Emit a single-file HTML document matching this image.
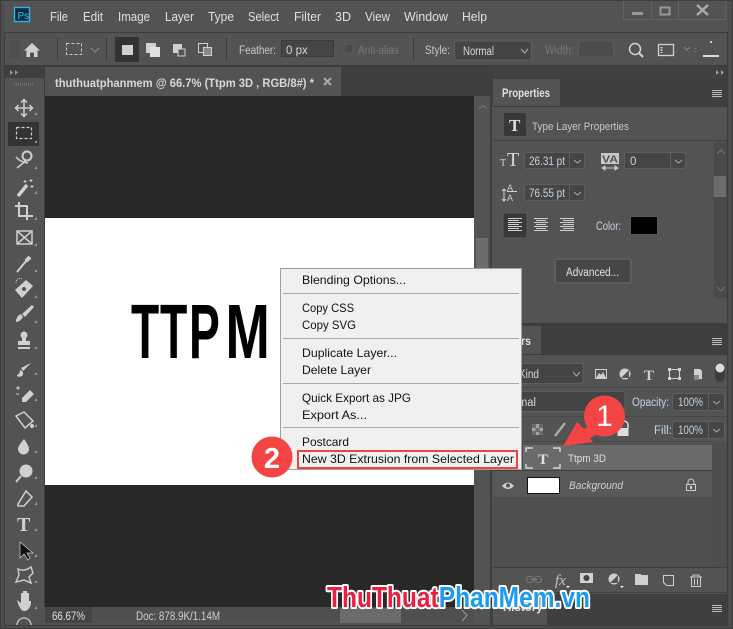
<!DOCTYPE html>
<html><head><meta charset="utf-8"><style>
html,body{margin:0;padding:0;background:#535353;width:733px;height:629px;overflow:hidden}
svg{display:block}
text{font-family:"Liberation Sans",sans-serif;font-size:12px;fill:#d8d8d8}
.m{font-size:12.5px;fill:#e0e0e0}
.c{fill:#111;font-size:12px}
.f{fill:#c4d4e4;font-size:11.5px}
.l{stroke:#3c3c3c;stroke-width:1;fill:none}
.i{fill:#d0d0d0}
.fld{fill:#454545;stroke:#5e5e5e}
</style></head><body>
<svg width="733" height="629" viewBox="0 0 733 629" xmlns="http://www.w3.org/2000/svg">
<rect width="733" height="629" fill="#535353"/>
<rect x="0.5" y="0.5" width="732" height="628" fill="none" stroke="#3d3d3d"/>
<rect x="1" y="1" width="3" height="627" fill="#4c4c4c"/><rect x="728" y="1" width="4" height="627" fill="#4c4c4c"/>
<rect x="1" y="625" width="731" height="3" fill="#4c4c4c"/>
<path class="l" d="M4.500 32.500H728.500M4.500 65.500H728.500M4.500 32.500V625.500M727.500 32.500V625.500M4.500 625.500H727.500"/>
<!-- PS logo -->
<rect x="14.500" y="7.500" width="15" height="14" fill="#0c2a3a" stroke="#29b4f0" stroke-width="1.400"/>
<text x="17.500" y="19" style="font-size:10px;fill:#31c5f4">Ps</text>
<!-- menu -->
<text class="m" x="50" y="21" textLength="18" lengthAdjust="spacingAndGlyphs">File</text>
<text class="m" x="83" y="21" textLength="20" lengthAdjust="spacingAndGlyphs">Edit</text>
<text class="m" x="118" y="21" textLength="32" lengthAdjust="spacingAndGlyphs">Image</text>
<text class="m" x="165" y="21" textLength="29" lengthAdjust="spacingAndGlyphs">Layer</text>
<text class="m" x="208" y="21" textLength="26" lengthAdjust="spacingAndGlyphs">Type</text>
<text class="m" x="248" y="21" textLength="31" lengthAdjust="spacingAndGlyphs">Select</text>
<text class="m" x="294" y="21" textLength="27" lengthAdjust="spacingAndGlyphs">Filter</text>
<text class="m" x="335" y="21" textLength="16" lengthAdjust="spacingAndGlyphs">3D</text>
<text class="m" x="365" y="21" textLength="25" lengthAdjust="spacingAndGlyphs">View</text>
<text class="m" x="404" y="21" textLength="44" lengthAdjust="spacingAndGlyphs">Window</text>
<text class="m" x="462" y="21" textLength="25" lengthAdjust="spacingAndGlyphs">Help</text>
<!-- window controls -->
<path d="M623.500 1V19.500H725.500V1M651.500 1V19M678.500 1V19" fill="none" stroke="#636363"/>
<rect x="632" y="12" width="11" height="3" fill="#999"/>
<rect x="660.500" y="7.500" width="9" height="7" fill="none" stroke="#999" stroke-width="2"/>
<path d="M697 5L708 15M708 5L697 15" stroke="#aaa" stroke-width="2.500"/>
<!-- options bar -->
<path stroke="#4a4a4a" d="M9 41H20M9 43H20M9 45H20M9 47H20M9 49H20M9 51H20M9 53H20M9 55H20M9 57H20" />
<path class="i" d="M32 43L24 50.500H26.500V57H30V52.500H34V57H37.500V50.500H40Z"/>
<path d="M57.500 37V61M106.500 37V61M226.500 37V61M413.500 37V61" stroke="#3f3f3f"/>
<rect x="66.500" y="43.500" width="15" height="11" fill="none" stroke="#ccc" stroke-dasharray="3 2"/>
<path d="M91 48L95 52L99 48" fill="none" stroke="#8a8a8a"/>
<rect x="115" y="37" width="24" height="25" rx="1" fill="#333"/>
<rect x="122" y="45" width="11" height="10" class="i"/>
<rect x="146" y="43" width="10" height="10" class="i"/><rect x="150" y="47" width="10" height="10" fill="#e0e0e0"/>
<rect x="173" y="44" width="9" height="9" class="i"/><rect x="178" y="49" width="7" height="7" fill="#535353" stroke="#d0d0d0"/>
<rect x="198.500" y="43.500" width="9" height="9" fill="none" stroke="#d0d0d0"/><rect x="203.500" y="47.500" width="8" height="8" fill="#8a8a8a" stroke="#d0d0d0"/>
<text x="239" y="54" style="font-size:11.500px;fill:#c8c8c8" textLength="37" lengthAdjust="spacingAndGlyphs">Feather:</text>
<rect x="281.500" y="40.500" width="52" height="16" fill="#454545" stroke="#3a3a3a"/>
<text x="286" y="54" style="font-size:11.500px">0 px</text>
<rect x="344" y="44" width="9" height="9" fill="#4a4a4a" stroke="#5e5e5e"/>
<text x="358" y="54" style="font-size:11.500px;fill:#777" textLength="41" lengthAdjust="spacingAndGlyphs">Anti-alias</text>
<text x="425" y="54" style="font-size:11.500px;fill:#c8c8c8" textLength="25" lengthAdjust="spacingAndGlyphs">Style:</text>
<rect x="454.500" y="41" width="77" height="19" rx="2" fill="#444" stroke="#5f5f5f"/>
<text x="463" y="55" style="font-size:11.500px" textLength="31" lengthAdjust="spacingAndGlyphs">Normal</text>
<path d="M521 49L524.500 53L528 49" fill="none" stroke="#b0b0b0"/>
<text x="545" y="54" style="font-size:11.500px;fill:#777" textLength="29" lengthAdjust="spacingAndGlyphs">Width:</text>
<rect x="578.500" y="41" width="35" height="16" fill="#4c4c4c" stroke="#5a5a5a"/>
<circle cx="635" cy="49" r="5.500" fill="none" stroke="#d4d4d4" stroke-width="1.500"/><path d="M639 53L643 57" stroke="#d4d4d4" stroke-width="2"/>
<rect x="658.500" y="44.500" width="15" height="11" fill="none" stroke="#d0d0d0" stroke-width="1.300"/><path d="M661.500 47V53" stroke="#d0d0d0" stroke-width="2" stroke-dasharray="1.500 1"/>
<path d="M684 47L687 50L690 47" fill="none" stroke="#8a8a8a"/><path d="M695 48v1M695 51v1" stroke="#888"/>
<rect x="703" y="55" width="16" height="2" fill="#ddd"/><rect x="710" y="41" width="2" height="2" fill="#ccc"/>
<!-- tab bar -->
<rect x="45" y="66" width="445" height="30" fill="#3f3f3f"/>
<rect x="45" y="67" width="296" height="29" fill="#535353"/>
<text x="55" y="87" style="font-size:12px;font-weight:bold;fill:#d8d8d8" textLength="259" lengthAdjust="spacingAndGlyphs">thuthuatphanmem @ 66.7% (Ttpm 3D , RGB/8#) *</text>
<path d="M324 78L331 85M331 78L324 85" stroke="#aaa" stroke-width="2"/>
<!-- left toolbar -->
<rect x="5" y="66" width="39" height="12" fill="#3f3f3f"/>
<path d="M10 70L13 72.500L10 75ZM15 70L18 72.500L15 75Z" fill="#999"/>
<path d="M14 84.500H33" stroke="#6b6b6b" stroke-width="3" stroke-dasharray="1 1"/>
<path d="M44.500 66V607" stroke="#3c3c3c"/>
<!-- canvas -->
<rect x="45" y="96" width="429" height="122" fill="#282828"/>
<rect x="45" y="218" width="429" height="267" fill="#fff"/>
<rect x="45" y="485" width="429" height="122" fill="#282828"/>
<!-- doc scrollbar -->
<rect x="474" y="96" width="16" height="511" fill="#535353"/>
<path d="M479 109L483 105.500L487 109" fill="none" stroke="#777"/>
<rect x="476" y="238" width="12" height="32" fill="#6c6c6c"/>
<path d="M490.500 66V626M491.500 66V626" stroke="#3e3e3e"/>
<!-- status -->
<rect x="45" y="607" width="429" height="16" fill="#4f4f4f"/>
<rect x="45" y="607" width="47" height="16" fill="#444"/>
<text x="52" y="620" style="font-size:11.500px;fill:#d8e0e8" textLength="33" lengthAdjust="spacingAndGlyphs">66.67%</text>
<text x="136" y="620" style="font-size:11.500px;fill:#c8d0d8" textLength="84" lengthAdjust="spacingAndGlyphs">Doc: 878.9K/1.14M</text>
<rect x="340" y="608" width="61" height="15" fill="#6b6b6b"/>
<path d="M462 610L467 615.500L462 621" fill="none" stroke="#999"/>
<!-- TTPM -->
<text transform="translate(131,358) scale(.6,1)" style="font-size:77px;font-weight:bold;fill:#000">T</text>
<text transform="translate(160,358) scale(.58,1)" style="font-size:77px;font-weight:bold;fill:#000">T</text>
<text transform="translate(189,358) scale(.6,1)" style="font-size:77px;font-weight:bold;fill:#000">P</text>
<text transform="translate(225.500,358) scale(.69,1)" style="font-size:77px;font-weight:bold;fill:#000">M</text>
<!-- tools -->
<rect x="8" y="122" width="31" height="24" rx="1" fill="#333"/>
<g fill="none" stroke="#d0d0d0" stroke-width="1.500">
<path d="M24 100V116M16 108H32M21 102.500L24 99.500L27 102.500M21 113.500L24 116.500L27 113.500M18.500 105L15.500 108L18.500 111M29.500 105L32.500 108L29.500 111"/>
<rect x="16.500" y="127.500" width="15" height="11" stroke-dasharray="3 2" stroke-width="1.200"/>
<path d="M17 168L27 160M16 157Q20 162 28 163"/><circle cx="27" cy="156" r="4.500" stroke-width="2"/>
<path d="M18 196L27 185" stroke-width="3.500"/>
<path d="M25 180v3M23.500 181.500h3M31 179v3M29.500 180.500h3M32 185v3M30.500 186.500h3" stroke-width="1"/>
<path d="M15 206H27V220M19 202V216H33" stroke-width="2"/>
<rect x="17" y="231" width="15" height="13"/><path d="M17 231L32 244M32 231L17 244"/>
<path d="M17 272L27 260" stroke-width="2"/><path d="M26 261L30 257" stroke-width="4"/>
</g>
<circle cx="24" cy="335" r="3.500" class="i"/><rect x="22" y="337" width="4" height="5" class="i"/><rect x="18" y="341" width="12" height="4" class="i"/><rect x="18" y="347" width="12" height="2" class="i"/>
<path d="M15 290L26 280L33 286L22 298Z" class="i"/><path d="M16 283a4 4 0 0 1 6-4" stroke="#ccc" stroke-dasharray="1 1" fill="none"/>
<circle cx="24" cy="289" r="2" fill="#535353"/>
<path d="M32 305L34 307L25 317L22 314Z" class="i"/><path d="M16 322Q20 322 23 317L21 314Q16 316 16 322Z" class="i"/>
<path d="M31 363L23 371L21 368ZM20 370Q25 372 22 376Q17 378 17 375Q20 374 20 370Z" class="i"/>
<path d="M22 398L30 390L34 394L26 402H22Z" class="i"/><path d="M16 388h4M18 386v4M16 394h3" stroke="#ccc"/>
<path d="M16 416L24 412L33 421L25 428Z" fill="none" stroke="#d0d0d0" stroke-width="1.500"/><circle cx="32" cy="426" r="2" class="i"/>
<path d="M24 439Q29 446 29 449A5.500 5.500 0 0 1 18 449Q18 446 24 439Z" class="i"/>
<circle cx="26" cy="471" r="6.500" class="i"/><path d="M21 476L16 482" stroke="#d0d0d0" stroke-width="2"/>
<path d="M18 504L26 491L32 497L24 506H18Z" fill="none" stroke="#d0d0d0" stroke-width="1.500"/>
<text x="17" y="531" style="font-family:'Liberation Serif';font-size:20px;font-weight:bold;fill:#d0d0d0">T</text>
<path d="M20 542V558L24 554L28 560L30 558L27 553H33Z" fill="#111" stroke="#cfcfcf" stroke-width=".7"/>
<path d="M18 569Q24 572 31 567L33 573L29 577L31 583L24 580L16 582L19 575Z" fill="none" stroke="#c8c8c8" stroke-width="1.500"/>
<path d="M17 600L21 603V593H23V599V591H25V599V591H27V599V593H29V601H31V604Q29 611 24 611Q20 611 17 600Z" class="i"/>
<path d="M17 625a7 7 0 0 1 14 0" fill="none" stroke="#bbb" stroke-width="1.500"/>
<path d="M34 115l3-3v3zM34 143l3-3v3zM34 169l3-3v3zM34 194l3-3v3zM34 220l3-3v3zM34 246l3-3v3zM34 272l3-3v3zM34 298l3-3v3zM34 323l3-3v3zM34 349l3-3v3zM34 375l3-3v3zM34 401l3-3v3zM34 427l3-3v3zM34 453l3-3v3zM34 479l3-3v3zM34 505l3-3v3zM34 531l3-3v3zM34 557l3-3v3zM34 583l3-3v3zM34 609l3-3v3z" fill="#999"/>
<!-- Right panel -->
<rect x="492" y="66" width="235" height="13" fill="#404040"/>
<path d="M716 70L719 72.500L716 75ZM721 70L724 72.500L721 75Z" fill="#999"/>
<rect x="492" y="79" width="235" height="27" fill="#3f3f3f"/>
<rect x="493" y="79" width="67" height="28" fill="#535353"/>
<text x="502" y="97" style="font-size:11.500px;font-weight:bold;fill:#e0e0e0" textLength="48" lengthAdjust="spacingAndGlyphs">Properties</text>
<path d="M712 90.500H722M712 92.500H722M712 94.500H722M712 96.500H722" stroke="#bbb"/>
<path d="M493 106.500H727" stroke="#3c3c3c"/>
<rect x="504" y="113" width="22" height="23" rx="1" fill="#383838"/>
<text x="509" y="131" style="font-family:'Liberation Serif';font-size:17px;font-weight:bold;fill:#ddd">T</text>
<text x="532" y="130" style="font-size:11px;fill:#c8c8c8" textLength="97" lengthAdjust="spacingAndGlyphs">Type Layer Properties</text>
<path d="M493 140.500H727" stroke="#3f3f3f"/>
<rect x="714" y="142" width="13" height="156" fill="#4a4a4a"/>
<path d="M717 154L721 150L725 154M717 287L721 291L725 287" fill="none" stroke="#777"/>
<rect x="714" y="176" width="12" height="21" fill="#6c6c6c"/>
<text x="500" y="166" style="font-family:'Liberation Serif';font-size:10px;fill:#d8d8d8">T</text>
<text x="507" y="166" style="font-family:'Liberation Serif';font-size:20px;fill:#d8d8d8">T</text>
<rect x="524.500" y="152.500" width="60" height="16" rx="2" class="fld"/><path d="M569.500 153V168" stroke="#5e5e5e"/>
<text x="529" y="165" class="f" textLength="36" lengthAdjust="spacingAndGlyphs">26.31 pt</text>
<path d="M574 160L577.500 163L581 160" fill="none" stroke="#aaa"/>
<rect x="601" y="153" width="18" height="11" fill="#c8c8c8"/>
<text x="602" y="162.500" style="font-size:10px;font-weight:bold;fill:#535353" textLength="16" lengthAdjust="spacingAndGlyphs">VA</text>
<path d="M602 168H618M602 168l3-2v4zM618 168l-3-2v4z" stroke="#c8c8c8" fill="#c8c8c8"/>
<rect x="624.500" y="152.500" width="61" height="16" rx="2" class="fld"/><path d="M670.500 153V168" stroke="#5e5e5e"/>
<text x="630" y="165" class="f">0</text>
<path d="M675 160L678.500 163L682 160" fill="none" stroke="#aaa"/>
<text x="507" y="191" style="font-size:9px;fill:#d0d0d0">A</text><text x="507" y="201" style="font-size:9px;fill:#d0d0d0">A</text>
<path d="M504 189V201M506 191L504 189L502 191M502 199L504 201L506 199M507 191.500H517" stroke="#d0d0d0" fill="none"/>
<rect x="524.500" y="184.500" width="60" height="16" rx="2" class="fld"/><path d="M569.500 185V200" stroke="#5e5e5e"/>
<text x="529" y="197" class="f" textLength="36" lengthAdjust="spacingAndGlyphs">76.55 pt</text>
<path d="M574 192L577.500 195L581 192" fill="none" stroke="#aaa"/>
<rect x="503" y="213" width="24" height="25" rx="2" fill="#383838" stroke="#5a5a5a"/>
<path d="M508 218.500H522M508 220.500H519M508 222.500H522M508 224.500H519M508 226.500H522M508 228.500H519M508 230.500H522M534 218.500H548M536 220.500H546M534 222.500H548M536 224.500H546M534 226.500H548M536 228.500H546M534 230.500H548M560 218.500H574M563 220.500H574M560 222.500H574M563 224.500H574M560 226.500H574M563 228.500H574M560 230.500H574" stroke="#d0d0d0"/>
<text x="596" y="230" style="font-size:11.500px;fill:#c4d4e4" textLength="25" lengthAdjust="spacingAndGlyphs">Color:</text>
<rect x="630.500" y="216.500" width="27" height="18" fill="#000" stroke="#5a5a5a"/>
<rect x="555" y="259" width="76" height="24" rx="2" fill="#464646" stroke="#5c5c5c" stroke-width="2"/>
<text x="566" y="276" style="font-size:11.500px;fill:#dce4ec" textLength="53" lengthAdjust="spacingAndGlyphs">Advanced...</text>
<!-- layers header -->
<rect x="492" y="323" width="235" height="3" fill="#3c3c3c"/>
<rect x="492" y="326" width="235" height="28" fill="#3f3f3f"/>
<rect x="493" y="326" width="48" height="29" fill="#535353"/>
<text x="497" y="345" style="font-size:11.500px;font-weight:bold;fill:#e0e0e0" textLength="34" lengthAdjust="spacingAndGlyphs">Layers</text>
<path d="M712 338.500H722M712 340.500H722M712 342.500H722M712 344.500H722" stroke="#bbb"/>
<path d="M493 354.500H727" stroke="#3c3c3c"/>
<rect x="500" y="363.500" width="83" height="20" rx="2" fill="#444" stroke="#5f5f5f"/>
<text x="519" y="378" style="font-size:11.500px" textLength="20" lengthAdjust="spacingAndGlyphs">Kind</text>
<path d="M573 372L576.500 376L580 372" fill="none" stroke="#aaa"/>
<rect x="595.500" y="369.500" width="11" height="9" fill="none" stroke="#d0d0d0"/><path d="M596 378L599 373L601 375L603 372L606 378Z" class="i"/>
<circle cx="625" cy="374" r="5.500" class="i"/><path d="M621 378L629 370V378Z" fill="#555"/>
<text x="644" y="380" style="font-family:'Liberation Serif';font-size:15px;font-weight:bold;fill:#d0d0d0">T</text>
<rect x="669.500" y="369.500" width="10" height="9" fill="none" stroke="#d0d0d0"/>
<path d="M668 368h3v3h-3zM678 368h3v3h-3zM668 377h3v3h-3zM678 377h3v3h-3z" class="i"/>
<path d="M694 369H700L702 371V379H694Z" class="i"/><rect x="694" y="375" width="5" height="5" fill="#888"/>
<rect x="715" y="363" width="10" height="19" rx="5" fill="#3c3c3c"/><circle cx="720" cy="368" r="4.500" fill="#ddd"/>
<path d="M493 387.500H727M493 416.500H727M493 441.500H712" stroke="#484848"/>
<rect x="500" y="391.500" width="125" height="20" rx="2" fill="#444" stroke="#5f5f5f"/>
<text x="500" y="406" style="font-size:11.500px" textLength="36" lengthAdjust="spacingAndGlyphs">Normal</text>
<text x="632" y="406" style="font-size:11.500px;fill:#c4d4e4" textLength="37" lengthAdjust="spacingAndGlyphs">Opacity:</text>
<rect x="672.500" y="393.500" width="52" height="17" rx="2" class="fld"/><path d="M708.500 394V410" stroke="#5e5e5e"/>
<text x="678" y="406" class="f" textLength="25" lengthAdjust="spacingAndGlyphs">100%</text>
<path d="M713 401L716.500 404L720 401" fill="none" stroke="#aaa"/>
<rect x="532" y="424" width="11" height="11" fill="#a5a5a5"/>
<path d="M532 424h4v4h-4zM539 424h4v4h-4zM535.500 428h4v4h-4zM532 431h4v4h-4zM539 431h4v4h-4z" fill="#6c6c6c"/>
<path d="M555 436L565 423" stroke="#a8a8a8" stroke-width="2.500"/>
<path d="M620 428V425a4 4 0 0 1 8 0V428" fill="none" stroke="#ddd" stroke-width="1.500"/><rect x="617.500" y="428" width="11" height="8" fill="#ddd"/>
<text x="654" y="434" style="font-size:11.500px;fill:#c4d4e4">Fill:</text>
<rect x="672.500" y="421.500" width="52" height="17" rx="2" class="fld"/><path d="M708.500 422V438" stroke="#5e5e5e"/>
<text x="678" y="434" class="f" textLength="25" lengthAdjust="spacingAndGlyphs">100%</text>
<path d="M713 429L716.500 432L720 429" fill="none" stroke="#aaa"/>
<!-- layer rows -->
<rect x="712" y="442" width="15" height="126" fill="#4e4e4e"/>
<rect x="493" y="445" width="219" height="25" fill="#6a6a6a"/>
<path d="M522.500 445V497" stroke="#484848"/>
<path d="M533 448H526V452M553 448H560V452M526 464V468H533M560 464V468H553" fill="none" stroke="#eee" stroke-width="1.200"/>
<text x="538" y="464" style="font-family:'Liberation Serif';font-size:15px;font-weight:bold;fill:#e0e0e0">T</text>
<text x="568" y="462" style="font-size:11px;fill:#e0e0e0" textLength="38" lengthAdjust="spacingAndGlyphs">Ttpm 3D</text>
<path d="M493 470.500H712" stroke="#404040"/>
<rect x="493" y="471" width="219" height="26" fill="#585858"/>
<path d="M502 486Q508 479 514 486Q508 492 502 486Z" fill="#d0d0d0"/><circle cx="508" cy="485.500" r="2" fill="#535353"/>
<rect x="527.500" y="477.500" width="32" height="16" fill="#fff" stroke="#111"/>
<text x="569" y="489" style="font-size:11px;font-style:italic;fill:#d0d0d0" textLength="54" lengthAdjust="spacingAndGlyphs">Background</text>
<path d="M688 484V482a3 3 0 0 1 6 0V484" fill="none" stroke="#ccc"/><rect x="686.500" y="484.500" width="9" height="6" fill="none" stroke="#ccc"/><rect x="690" y="486" width="2" height="3" fill="#ccc"/>
<rect x="493" y="497" width="219" height="71" fill="#4f4f4f"/>
<path d="M493 567.500H727M493 592.500H727" stroke="#3f3f3f"/>
<!-- bottom layer icons -->
<path d="M530 579.500H538" stroke="#7a7a7a"/><rect x="526.500" y="576.500" width="7" height="6" rx="3" fill="none" stroke="#7a7a7a"/><rect x="534.500" y="576.500" width="7" height="6" rx="3" fill="none" stroke="#7a7a7a"/>
<text x="555" y="585" style="font-family:'Liberation Serif';font-style:italic;font-size:15px;fill:#c8c8c8">fx</text>
<rect x="580" y="573" width="13" height="10" class="i"/><circle cx="586.500" cy="578" r="3" fill="#444"/>
<circle cx="614" cy="579" r="5.500" class="i"/><path d="M610 583L618 575V583Z" fill="#555"/>
<path d="M635 575V574H641V575H648V585H635Z" class="i"/>
<path d="M663.500 575.500H673.500V585.500H666.500L663.500 582.500Z" fill="none" stroke="#d0d0d0"/>
<path d="M690 577H702M693 577V575H699V577M691.500 577V586.500H700.500V577M694.500 579V585M697.500 579V585" fill="none" stroke="#d0d0d0"/>
<path d="M566 586h4l-2 2zM620 586h4l-2 2z" fill="#eee"/>
<!-- history -->
<rect x="492" y="594" width="235" height="31" fill="#3f3f3f"/>
<rect x="493" y="595" width="54" height="30" fill="#535353"/>
<text x="503" y="611" style="font-size:11.500px;font-weight:bold;fill:#e0e0e0">History</text>
<path d="M712 605.500H722M712 607.500H722M712 609.500H722M712 611.500H722" stroke="#bbb"/>
<!-- context menu -->
<rect x="280.500" y="268.500" width="241" height="201" fill="#f0f0f0" stroke="#a0a0a0"/>
<path d="M283 293.500H519M283 338.500H519M283 383.500H519M283 427.500H519" stroke="#a8a8a8"/>
<text class="c" x="302" y="284" textLength="104" lengthAdjust="spacingAndGlyphs">Blending Options...</text>
<text class="c" x="302" y="312" textLength="52" lengthAdjust="spacingAndGlyphs">Copy CSS</text>
<text class="c" x="302" y="329" textLength="54" lengthAdjust="spacingAndGlyphs">Copy SVG</text>
<text class="c" x="302" y="357" textLength="95" lengthAdjust="spacingAndGlyphs">Duplicate Layer...</text>
<text class="c" x="302" y="374" textLength="69" lengthAdjust="spacingAndGlyphs">Delete Layer</text>
<text class="c" x="302" y="402" textLength="109" lengthAdjust="spacingAndGlyphs">Quick Export as JPG</text>
<text class="c" x="302" y="419" textLength="65" lengthAdjust="spacingAndGlyphs">Export As...</text>
<text class="c" x="302" y="446" textLength="47" lengthAdjust="spacingAndGlyphs">Postcard</text>
<text class="c" x="302" y="463" textLength="212" lengthAdjust="spacingAndGlyphs">New 3D Extrusion from Selected Layer</text>
<rect x="298" y="451" width="219" height="17" fill="none" stroke="#ef4444" stroke-width="2"/>
<!-- callouts -->
<circle cx="272" cy="457" r="20.500" fill="#f44444"/>
<text x="272" y="468" text-anchor="middle" style="font-size:29px;font-weight:bold;fill:#fff">2</text>
<path d="M563 446L577 422L584 429L596 424L598 434L590 438L593 442Z" fill="#f44444"/>
<circle cx="604.500" cy="416" r="20.500" fill="#f44444"/>
<text x="604.500" y="426" text-anchor="middle" style="font-size:30px;fill:#fff">1</text>
<!-- watermark -->
<text x="327" y="607" textLength="263" lengthAdjust="spacingAndGlyphs" style="font-size:29px;font-weight:bold;stroke:#fff;stroke-width:4px;stroke-linejoin:round;paint-order:stroke;fill:#1c9cee"><tspan style="fill:#ea2040">ThuThuat</tspan>PhanMem.vn</text>
</svg>
</body></html>
